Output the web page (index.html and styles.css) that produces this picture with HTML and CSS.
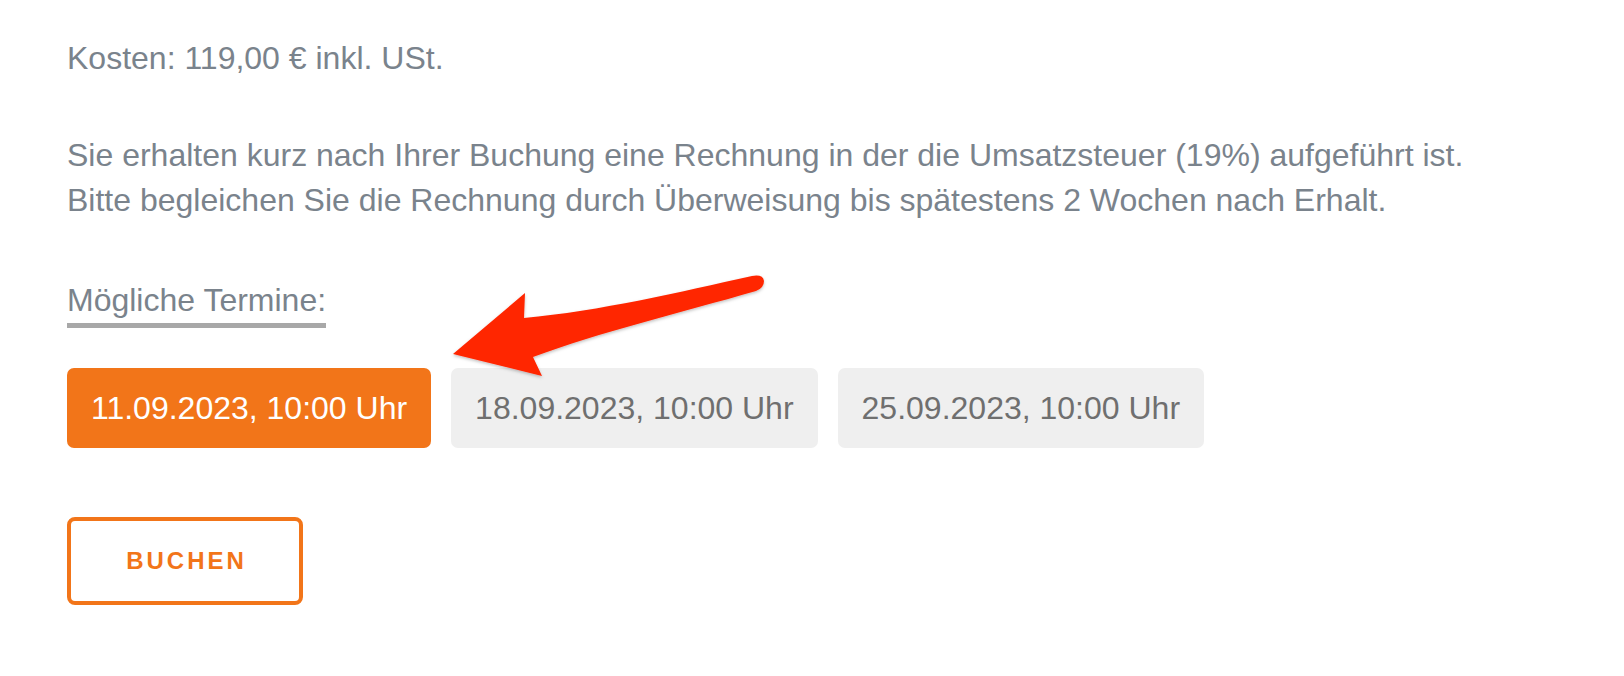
FILE: index.html
```html
<!DOCTYPE html>
<html lang="de">
<head>
<meta charset="utf-8">
<title>Buchung</title>
<link rel="stylesheet" href="styles.css">
</head>
<body>
<div class="page">
  <p class="cost">Kosten: 119,00 € inkl. USt.</p>
  <p class="info">Sie erhalten kurz nach Ihrer Buchung eine Rechnung in der die Umsatzsteuer (19%) aufgeführt ist.<br>Bitte begleichen Sie die Rechnung durch Überweisung bis spätestens 2 Wochen nach Erhalt.</p>
  <h3 class="dates-title">Mögliche Termine:</h3>
  <div class="dates">
    <button class="date date-active">11.09.2023, 10:00 Uhr</button>
    <button class="date">18.09.2023, 10:00 Uhr</button>
    <button class="date">25.09.2023, 10:00 Uhr</button>
  </div>
  <button class="book">BUCHEN</button>
  <svg class="annotation" width="1624" height="676" viewBox="0 0 1624 676" aria-hidden="true">
    <defs>
      <filter id="sh" x="-10%" y="-10%" width="120%" height="130%">
        <feDropShadow dx="0" dy="1.5" stdDeviation="1.5" flood-color="#000" flood-opacity="0.25"/>
      </filter>
    </defs>
    <path filter="url(#sh)" fill="#ff2600" d="M453,354 L525,293 L524,318 C600,311 680,292 752,276 Q763,274 764,281 Q764,288 756,291 C680,313 600,332 533,357 L542,376 Z"/>
  </svg>
</div>
</body>
</html>
```

FILE: styles.css
```css
html, body {
  margin: 0;
  padding: 0;
  background: #ffffff;
}

.page {
  position: relative;
  width: 1624px;
  height: 676px;
  box-sizing: border-box;
  padding: 36px 0 0 67px;
  font-family: "Liberation Sans", Arial, Helvetica, sans-serif;
  font-size: 32px;
  line-height: 45px;
  color: #7a838c;
}

.cost {
  margin: 0;
}

.info {
  margin: 52px 0 0;
}

.dates-title {
  display: inline-block;
  margin: 55px 0 0;
  font-size: 32px;
  font-weight: normal;
  line-height: 45px;
  color: #7a838c;
  border-bottom: 5px solid #a8a8a8;
}

.dates {
  display: flex;
  gap: 20px;
  margin-top: 40px;
}

.date {
  height: 80px;
  padding: 0 24px;
  border: none;
  border-radius: 7px;
  background: #efefef;
  color: #6f6f6f;
  font-family: inherit;
  font-size: 32px;
  cursor: pointer;
}

.date-active {
  background: #f27519;
  color: #ffffff;
}

.book {
  display: block;
  margin-top: 69px;
  width: 236px;
  height: 88px;
  box-sizing: border-box;
  border: 4px solid #f27519;
  border-radius: 8px;
  background: #ffffff;
  color: #f27519;
  font-family: inherit;
  font-size: 24px;
  font-weight: bold;
  letter-spacing: 3px;
  padding: 0 0 0 3px;
  cursor: pointer;
}

.annotation {
  position: absolute;
  left: 0;
  top: 0;
  pointer-events: none;
}
```
